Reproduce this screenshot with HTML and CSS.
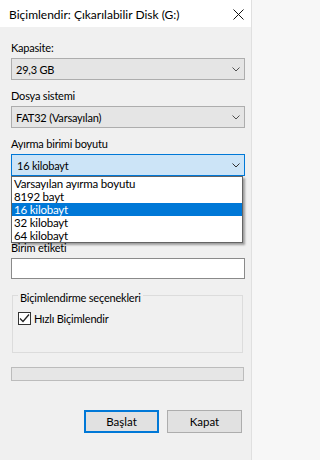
FILE: index.html
```html
<!DOCTYPE html>
<html lang="tr">
<head>
<meta charset="utf-8">
<title>Biçimlendir</title>
<link rel="stylesheet" href="styles.css">
</head>
<body>
<div class="window">
  <div class="titlebar">
    <span class="title">Biçimlendir: Çıkarılabilir Disk (G:)</span>
    <svg class="close" width="11" height="11" viewBox="0 0 11 11"><path d="M0.5 0.5 L10.5 10.5 M10.5 0.5 L0.5 10.5" stroke="#111" stroke-width="1" fill="none"/></svg>
  </div>
  <div class="content">
    <div class="label first">Kapasite:</div>
    <div class="combo">
      <span>29,3 GB</span>
      <svg class="chev" width="8" height="5" viewBox="0 0 8 5"><path d="M0.5 0.5 L4 4 L7.5 0.5" stroke="#505050" stroke-width="1" fill="none"/></svg>
    </div>

    <div class="label">Dosya sistemi</div>
    <div class="combo">
      <span>FAT32 (Varsayılan)</span>
      <svg class="chev" width="8" height="5" viewBox="0 0 8 5"><path d="M0.5 0.5 L4 4 L7.5 0.5" stroke="#505050" stroke-width="1" fill="none"/></svg>
    </div>

    <div class="label">Ayırma birimi boyutu</div>
    <div class="dropfield">
      <div class="combo open">
        <span>16 kilobayt</span>
        <svg class="chev" width="8" height="5" viewBox="0 0 8 5"><path d="M0.5 0.5 L4 4 L7.5 0.5" stroke="#303030" stroke-width="1" fill="none"/></svg>
      </div>
      <ul class="dropdown">
        <li>Varsayılan ayırma boyutu</li>
        <li>8192 bayt</li>
        <li class="sel">16 kilobayt</li>
        <li>32 kilobayt</li>
        <li>64 kilobayt</li>
      </ul>
    </div>

    <div class="label after-drop">Birim etiketi</div>
    <div class="textbox"></div>

    <fieldset class="group">
      <legend>Biçimlendirme seçenekleri</legend>
      <div class="check">
        <span class="box"><svg width="11" height="11" viewBox="0 0 11 11"><path d="M1 5.5 L4 8.5 L10 1.5" stroke="#222" stroke-width="1.3" fill="none"/></svg></span>
        <span>Hızlı Biçimlendir</span>
      </div>
    </fieldset>

    <div class="progress"></div>

    <div class="buttons">
      <button class="btn default">Başlat</button>
      <button class="btn">Kapat</button>
    </div>
  </div>
</div>
</body>
</html>
```

FILE: styles.css
```css
html, body {
  margin: 0;
  padding: 0;
  background: #f7f7f7;
}
body {
  font-family: "Lato", "Noto Sans", sans-serif;
  font-size: 11px;
  letter-spacing: -0.2px;
  color: #000;
}
.window {
  width: 251px;
  height: 460px;
  background: #f0f0f0;
  border-right: 1px solid #e0e0e0;
}
.titlebar {
  height: 27px;
  box-sizing: border-box;
  padding: 2px 7px 0 9px;
  background: #fff;
  display: flex;
  align-items: center;
  justify-content: space-between;
}
.title {
  font-size: 12px;
  letter-spacing: 0;
  line-height: 15px;
}
.close {
  display: block;
}
.content {
  padding: 0 6px 0 11px;
}
.label {
  line-height: 15px;
  height: 15px;
  margin-top: 8px;
  white-space: nowrap;
}
.label.first {
  margin-top: 13px;
}
.label.after-drop {
  margin-top: 64px;
}
.combo {
  margin-top: 3px;
  height: 22px;
  box-sizing: border-box;
  border: 1px solid #adadad;
  background: #e5e5e5;
  display: flex;
  align-items: center;
  justify-content: space-between;
  padding: 0 4px 0 4px;
  line-height: 15px;
}
.chev {
  display: block;
}
.combo.open {
  background: #cce4f7;
  border-color: #0078d7;
  padding-left: 5px;
}
.dropfield {
  position: relative;
}
.dropdown {
  position: absolute;
  left: 0;
  top: 22px;
  width: 232px;
  box-sizing: border-box;
  margin: 0;
  padding: 0;
  list-style: none;
  background: #fff;
  border: 1px solid #646464;
  box-shadow: 2px 2px 2px rgba(0, 0, 0, 0.35);
  z-index: 2;
}
.dropdown li {
  height: 13px;
  line-height: 13px;
  padding-left: 2px;
  white-space: nowrap;
  font-size: 11.5px;
}
.dropdown li.sel {
  background: #0078d7;
  color: #fff;
}
.textbox {
  margin-top: 3px;
  height: 21px;
  box-sizing: border-box;
  border: 1px solid #8a8a8a;
  background: #fff;
}
.group {
  margin: 7px 2px 0 1px;
  padding: 0 5px 26px 5px;
  border: 1px solid #dcdcdc;
  min-width: 0;
}
.group legend {
  margin-left: 0;
  padding: 4px 2px 0 2px;
  line-height: 15px;
  white-space: nowrap;
}
.check {
  margin-top: 6px;
  display: flex;
  align-items: center;
  gap: 3px;
  line-height: 15px;
}
.check .box {
  width: 13px;
  height: 13px;
  box-sizing: border-box;
  border: 1px solid #333;
  background: #fff;
  display: flex;
  align-items: center;
  justify-content: center;
}
.check .box svg {
  display: block;
}
.progress {
  margin: 14px 1px 0 0;
  height: 14px;
  box-sizing: border-box;
  border: 1px solid #bcbcbc;
  background: #e6e6e6;
}
.buttons {
  margin: 29px 3px 0 0;
  display: flex;
  justify-content: flex-end;
  gap: 8px;
}
.btn {
  width: 75px;
  height: 23px;
  box-sizing: border-box;
  border: 1px solid #adadad;
  background: #e1e1e1;
  font-family: inherit;
  font-size: 11.5px;
  letter-spacing: 0;
  color: #000;
  padding: 0;
  margin: 0;
}
.btn.default {
  border: 2px solid #0078d7;
}
```
